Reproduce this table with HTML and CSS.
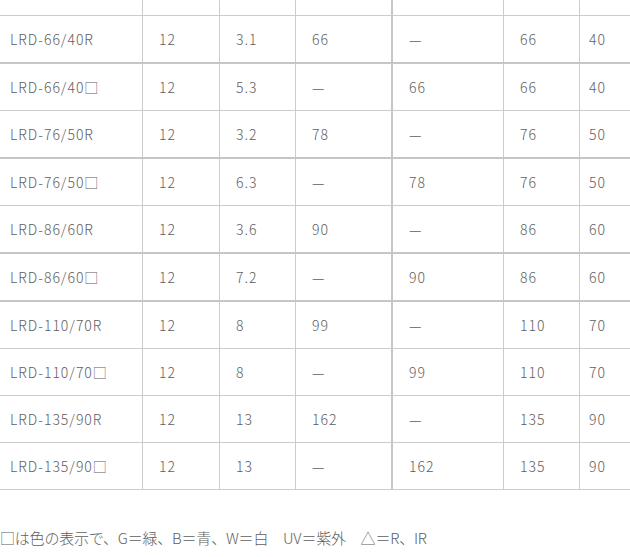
FILE: index.html
```html
<!DOCTYPE html>
<html lang="ja">
<head>
<meta charset="utf-8">
<title>LRD spec</title>
<link rel="stylesheet" href="styles.css">
</head>
<body>
<div class="spec">
  <div class="row row-top"><div class="cell"></div><div class="cell"></div><div class="cell"></div><div class="cell"></div><div class="cell"></div><div class="cell"></div><div class="cell"></div></div>
  <div class="row thick"><div class="cell">LRD-66/40R</div><div class="cell">12</div><div class="cell">3.1</div><div class="cell">66</div><div class="cell">—</div><div class="cell">66</div><div class="cell">40</div></div>
  <div class="row"><div class="cell">LRD-66/40□</div><div class="cell">12</div><div class="cell">5.3</div><div class="cell">—</div><div class="cell">66</div><div class="cell">66</div><div class="cell">40</div></div>
  <div class="row thick"><div class="cell">LRD-76/50R</div><div class="cell">12</div><div class="cell">3.2</div><div class="cell">78</div><div class="cell">—</div><div class="cell">76</div><div class="cell">50</div></div>
  <div class="row"><div class="cell">LRD-76/50□</div><div class="cell">12</div><div class="cell">6.3</div><div class="cell">—</div><div class="cell">78</div><div class="cell">76</div><div class="cell">50</div></div>
  <div class="row thick"><div class="cell">LRD-86/60R</div><div class="cell">12</div><div class="cell">3.6</div><div class="cell">90</div><div class="cell">—</div><div class="cell">86</div><div class="cell">60</div></div>
  <div class="row thick"><div class="cell">LRD-86/60□</div><div class="cell">12</div><div class="cell">7.2</div><div class="cell">—</div><div class="cell">90</div><div class="cell">86</div><div class="cell">60</div></div>
  <div class="row"><div class="cell">LRD-110/70R</div><div class="cell">12</div><div class="cell">8</div><div class="cell">99</div><div class="cell">—</div><div class="cell">110</div><div class="cell">70</div></div>
  <div class="row"><div class="cell">LRD-110/70□</div><div class="cell">12</div><div class="cell">8</div><div class="cell">—</div><div class="cell">99</div><div class="cell">110</div><div class="cell">70</div></div>
  <div class="row"><div class="cell">LRD-135/90R</div><div class="cell">12</div><div class="cell">13</div><div class="cell">162</div><div class="cell">—</div><div class="cell">135</div><div class="cell">90</div></div>
  <div class="row"><div class="cell">LRD-135/90□</div><div class="cell">12</div><div class="cell">13</div><div class="cell">—</div><div class="cell">162</div><div class="cell">135</div><div class="cell">90</div></div>
</div>
<p class="note">□は色の表示で、G＝緑、B＝青、W＝白　UV＝紫外　△＝R、IR</p>
</body>
</html>
```

FILE: styles.css
```css
html, body {
  margin: 0;
  padding: 0;
  background: #ffffff;
}
body {
  width: 630px;
  overflow: hidden;
  font-family: "Noto Sans CJK JP", "Noto Sans", sans-serif;
  font-weight: 300;
  color: #5e5e5e;
}
.spec {
  width: 660px;
}
.row {
  display: grid;
  grid-template-columns: 143px 77px 76px 97px 111px 76px 80px;
  border-bottom: 1px solid #cccccc;
}
.row.thick {
  border-bottom: 2px solid #c6c6c6;
}
.cell {
  box-sizing: border-box;
  border-right: 1px solid #cccccc;
  height: 46px;
  line-height: 46px;
  padding-left: 16px;
  font-size: 14px;
  letter-spacing: 1px;
  white-space: nowrap;
}
.cell:nth-child(1) {
  padding-left: 10px;
}
.cell:nth-child(4) {
  border-right: 2px solid #c6c6c6;
}
.cell:nth-child(7) {
  padding-left: 9px;
  border-right: none;
}
.row-top .cell {
  height: 15px;
  line-height: 15px;
}
.note {
  margin: 38px 0 0 0;
  font-size: 15px;
  line-height: 20px;
  letter-spacing: -0.2px;
  white-space: nowrap;
}
```
